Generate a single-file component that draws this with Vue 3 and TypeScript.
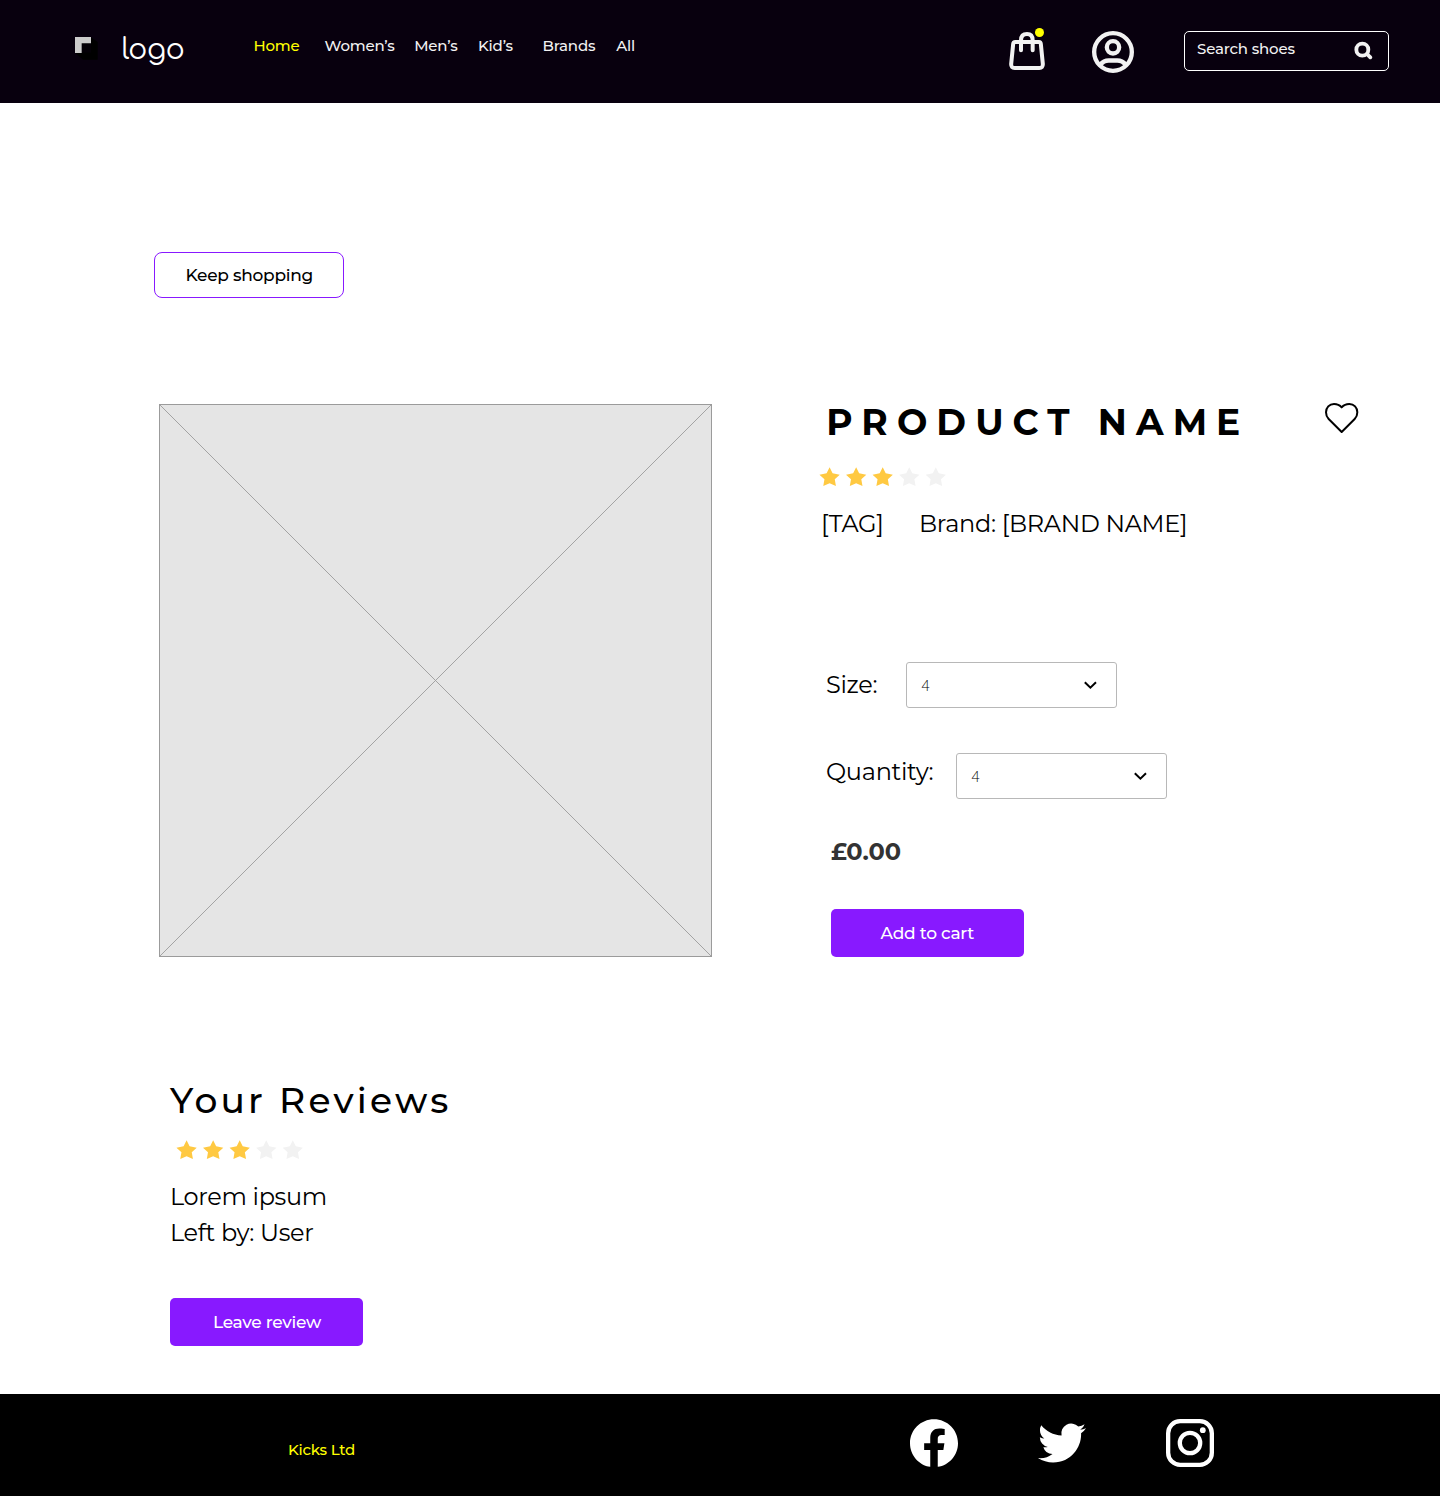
<script setup lang="ts">
import { ref } from 'vue'

interface NavLink {
  label: string
}

const links: NavLink[] = [
  { label: 'Home' },
  { label: 'Women’s' },
  { label: 'Men’s' },
  { label: 'Kid’s' },
  { label: 'Brands' },
  { label: 'All' },
]

const current = ref('Home')
const size = ref('4')
const quantity = ref('4')
const rating = 3
const stars = [0, 1, 2, 3, 4]
const starPath =
  'M58.500 232 67.500 250 89 254 74 268 77.500 288 58.500 279.500 39.500 288 43 268 28 254 49.500 250Z'
const starPitch = 79.8
</script>

<template>
  <div class="page">
    <header class="header">
      <svg class="mark" viewBox="75 81 69 69" aria-hidden="true">
        <path d="M123 82 143 96V149H99L76 129H95V100H123Z" fill="#000" />
        <path d="M95 100h28v28H95z" fill="#040007" />
        <path d="M75 81h48v19H95v29H75z" fill="#ccc" />
      </svg>
      <div class="logo">logo</div>
      <nav class="nav">
        <a
          v-for="link in links"
          :key="link.label"
          :class="{ active: link.label === current }"
          @click="current = link.label"
        >{{ link.label }}</a>
      </nav>
      <svg class="bag" viewBox="54 51 114 132" fill="none" stroke="#f2f2f2" stroke-width="12" stroke-linecap="round">
        <path d="M76 96H147Q152 96 152.500 102L158.500 162Q159 174 148 174H74Q63 174 63.500 162L69.500 102Q70 96 76 96Z" />
        <path d="M93 121V91Q93 72 111 72Q128 72 128 91V121" />
        <circle cx="148.500" cy="67.500" r="13.500" fill="#ff0" stroke="none" />
      </svg>
      <svg class="user" viewBox="303 60 132 132" fill="none" stroke="#f2f2f2" stroke-width="13">
        <circle cx="369" cy="126" r="56.500" />
        <circle cx="369" cy="112" r="18.500" />
        <path d="M331 164Q341 151.500 356 151.500H382Q397 151.500 407 164" />
      </svg>
      <div class="search">
        <span>Search shoes</span>
        <svg class="glass" viewBox="549 60 66 66" fill="none" stroke="#f2f2f2" stroke-width="11.500" stroke-linecap="round">
          <circle cx="577" cy="89" r="18" />
          <path d="M591 102 601 112" />
        </svg>
      </div>
    </header>

    <main>
      <button class="keep">Keep shopping</button>

      <section class="product">
        <svg class="photo" viewBox="0 0 553 553">
          <rect x=".5" y=".5" width="552" height="552" fill="#e5e5e5" stroke="#9b9b9b" />
          <path d="M.5.5 552.500 552.500M552.500.5.5 552.500" stroke="#9b9b9b" stroke-width=".9" />
        </svg>
        <div class="info">
          <div class="title-row">
            <h1>PRODUCT NAME</h1>
            <svg class="heart" viewBox="72 36 105 96" fill="none" stroke="#000" stroke-width="6" stroke-linejoin="round">
              <path d="M125 126 86 87C80 81 78 75 78 67C78 53 88 42 102 42C112 42 119 45 125 52C131 45 138 42 148 42C162 42 172 53 172 67C172 75 170 81 164 87Z" />
            </svg>
          </div>
          <svg class="stars" viewBox="27 231 384 58">
            <path v-for="s in stars" :key="s" :d="starPath" :transform="`translate(${s * starPitch} 0)`" :class="{ on: s < rating }" />
          </svg>
          <div class="tags">
            <span class="tag">[TAG]</span>
            <span>Brand: [BRAND NAME]</span>
          </div>
          <div class="field">
            <div class="label size">Size:</div>
            <div class="select">
              <span>{{ size }}</span>
              <svg viewBox="0 0 14 10"><path d="M.800 2.300 6.400 7.700 12 2.300" /></svg>
            </div>
          </div>
          <div class="field quantity">
            <div class="label">Quantity:</div>
            <div class="select">
              <span>{{ quantity }}</span>
              <svg viewBox="0 0 14 10"><path d="M.800 2.300 6.400 7.700 12 2.300" /></svg>
            </div>
          </div>
          <div class="price">£0.00</div>
          <button class="primary add">Add to cart</button>
        </div>
      </section>

      <section class="reviews">
        <h2>Your Reviews</h2>
        <svg class="stars" viewBox="27 231 384 58">
          <path v-for="s in stars" :key="s" :d="starPath" :transform="`translate(${s * starPitch} 0)`" :class="{ on: s < rating }" />
        </svg>
        <p>Lorem ipsum</p>
        <p>Left by: User</p>
        <button class="primary leave">Leave review</button>
      </section>
    </main>

    <footer class="footer">
      <div class="company">Kicks Ltd</div>
      <div class="social">
        <svg viewBox="0 0 24 24" fill="#fff">
          <path d="M24 12.073c0-6.627-5.373-12-12-12s-12 5.373-12 12c0 5.99 4.388 10.954 10.125 11.854v-8.385H7.078v-3.47h3.047V9.43c0-3.007 1.792-4.669 4.533-4.669 1.312 0 2.686.235 2.686.235v2.953H15.83c-1.491 0-1.956.925-1.956 1.874v2.25h3.328l-.532 3.47h-2.796v8.385C19.612 23.027 24 18.062 24 12.073z" />
        </svg>
        <svg viewBox="0 0 24 24" fill="#fff">
          <path d="M23.953 4.57a10 10 0 01-2.825.775 4.958 4.958 0 002.163-2.723c-.951.555-2.005.959-3.127 1.184a4.92 4.92 0 00-8.384 4.482C7.69 8.095 4.067 6.13 1.64 3.162a4.822 4.822 0 00-.666 2.475c0 1.71.87 3.213 2.188 4.096a4.904 4.904 0 01-2.228-.616v.06a4.923 4.923 0 003.946 4.827 4.996 4.996 0 01-2.212.085 4.936 4.936 0 004.604 3.417 9.867 9.867 0 01-6.102 2.105c-.39 0-.779-.023-1.17-.067a13.995 13.995 0 007.557 2.209c9.053 0 13.998-7.496 13.998-13.985 0-.21 0-.42-.015-.63A9.935 9.935 0 0024 4.59z" />
        </svg>
        <svg viewBox="0 0 48 48" fill="none" stroke="#fff" stroke-width="4.300">
          <rect x="2.150" y="2.150" width="43.700" height="43.700" rx="12" />
          <circle cx="24" cy="24" r="10.200" />
          <circle cx="36.800" cy="11.200" r="2.900" fill="#fff" stroke="none" />
        </svg>
      </div>
    </footer>
  </div>
</template>

<style>
body {
  margin: 0;
  background: #fff;
}
</style>

<style scoped>
.page {
  width: 1440px;
  height: 1496px;
  display: flex;
  flex-direction: column;
  font-family: Montserrat, Inter, sans-serif;
  color: #000;
  white-space: nowrap;
}
svg {
  display: block;
  flex: none;
}
h1, h2, p {
  margin: 0;
}
button {
  display: block;
  box-sizing: border-box;
  padding: 0;
  border: 0;
  font-family: inherit;
  font-size: 17px;
  font-weight: 500;
  letter-spacing: -.26px;
  text-align: left;
}

.header {
  display: flex;
  align-items: flex-start;
  height: 103px;
  box-sizing: border-box;
  padding: 0 51px 0 75px;
  background: #08000e;
  color: #f2f2f2;
}
.mark {
  width: 23px;
  height: 23px;
  margin-top: 37px;
}
.logo {
  width: 132px;
  margin-left: 23.500px;
  font-family: Comfortaa, Quicksand, sans-serif;
  font-size: 28px;
  font-weight: 400;
  letter-spacing: -.2px;
  line-height: 100px;
  color: #fff;
}
.nav {
  display: grid;
  grid-template-columns: 71px 89.700px 63.800px 64.600px 73.700px 60px;
  font-size: 15px;
  font-weight: 500;
  letter-spacing: -.18px;
  line-height: 92px;
}
.nav a { cursor: pointer; }
.nav .active { color: #ff0; }
.bag {
  width: 38px;
  height: 44px;
  margin: 27px 0 0 auto;
}
.user {
  width: 44px;
  height: 44px;
  margin: 30px 49px 0 45px;
}
.search {
  display: flex;
  justify-content: space-between;
  width: 205px;
  height: 40px;
  box-sizing: border-box;
  margin-top: 31px;
  padding: 0 13px 0 12px;
  border: 1px solid #fff;
  border-radius: 5px;
  font-size: 15px;
  font-weight: 500;
  letter-spacing: -.18px;
  line-height: 34px;
}
.glass {
  width: 22px;
  height: 22px;
  margin-top: 8px;
}

.keep {
  width: 190px;
  height: 46px;
  margin: 149px 0 0 154px;
  padding-left: 30.500px;
  border: 1px solid #8819ff;
  border-radius: 8px;
  background: #fff;
  color: #000;
}

.product {
  display: flex;
  margin: 104px 0 0 159px;
}
.photo {
  width: 553px;
  height: 553px;
  margin-top: 2px;
}
.info {
  width: 540px;
  margin-left: 107px;
}
.title-row {
  display: flex;
  justify-content: space-between;
  height: 41px;
  padding-left: 7.300px;
}
h1 {
  font-size: 36px;
  font-weight: 700;
  line-height: 41px;
  letter-spacing: 9.070px;
}
.heart {
  width: 35px;
  height: 32px;
}
.stars {
  width: 128px;
  height: 19.300px;
  margin-top: 24px;
  fill: #f2f2f2;
}
.stars .on { fill: #ffc942; }
.tags {
  display: flex;
  margin-top: 22.400px;
  padding-left: 2px;
  font-size: 24px;
  letter-spacing: -.3px;
  line-height: 30px;
}
.tag { width: 98px; }
.field {
  display: flex;
  align-items: center;
  margin-top: 123.300px;
  padding-left: 7px;
  font-size: 24px;
  letter-spacing: -.3px;
}
.label {
  width: 130px;
  line-height: 30px;
}
.label.size { width: 80px; }
.quantity {
  margin-top: 45px;
  letter-spacing: -.264px;
}
.quantity .label { padding-bottom: 8px; }
.select {
  display: flex;
  align-items: center;
  justify-content: space-between;
  width: 211px;
  height: 46px;
  box-sizing: border-box;
  padding: 0 18.300px 0 14.500px;
  border: 1px solid #b8b8b8;
  border-radius: 3px;
  background: #fff;
  font-family: "Open Sans", sans-serif;
  font-size: 14px;
  font-weight: 350;
}
.select span { padding-top: 1px; }
.select svg {
  width: 14px;
  height: 10px;
  fill: none;
  stroke: #000;
  stroke-width: 2;
}
.price {
  margin-top: 38px;
  padding-left: 12px;
  color: #333;
  font-size: 24px;
  font-weight: 700;
  letter-spacing: .1px;
  line-height: 30px;
}
.primary {
  width: 193px;
  height: 48px;
  border-radius: 5px;
  background: #8819ff;
  color: #fff;
}
.add {
  margin: 42px 0 0 12px;
  padding-left: 49.600px;
}

.reviews {
  margin: 120.700px 0 0 170px;
}
h2 {
  font-size: 36px;
  font-weight: 500;
  line-height: 44px;
  letter-spacing: 3.250px;
}
.reviews .stars { margin: 18.300px 0 19.300px 6.300px; }
.reviews p {
  font-size: 24px;
  letter-spacing: -.34px;
  line-height: 36px;
}
.leave {
  margin-top: 47.400px;
  padding-left: 43px;
}

.footer {
  display: flex;
  height: 102px;
  margin-top: auto;
  background: #000;
}
.company {
  width: 622px;
  padding-left: 288px;
  color: #ff0;
  font-size: 15px;
  font-weight: 500;
  letter-spacing: -.22px;
  line-height: 112px;
}
.social {
  display: flex;
  gap: 80px;
  padding-top: 25px;
}
.social svg {
  width: 48px;
  height: 48px;
}
</style>
